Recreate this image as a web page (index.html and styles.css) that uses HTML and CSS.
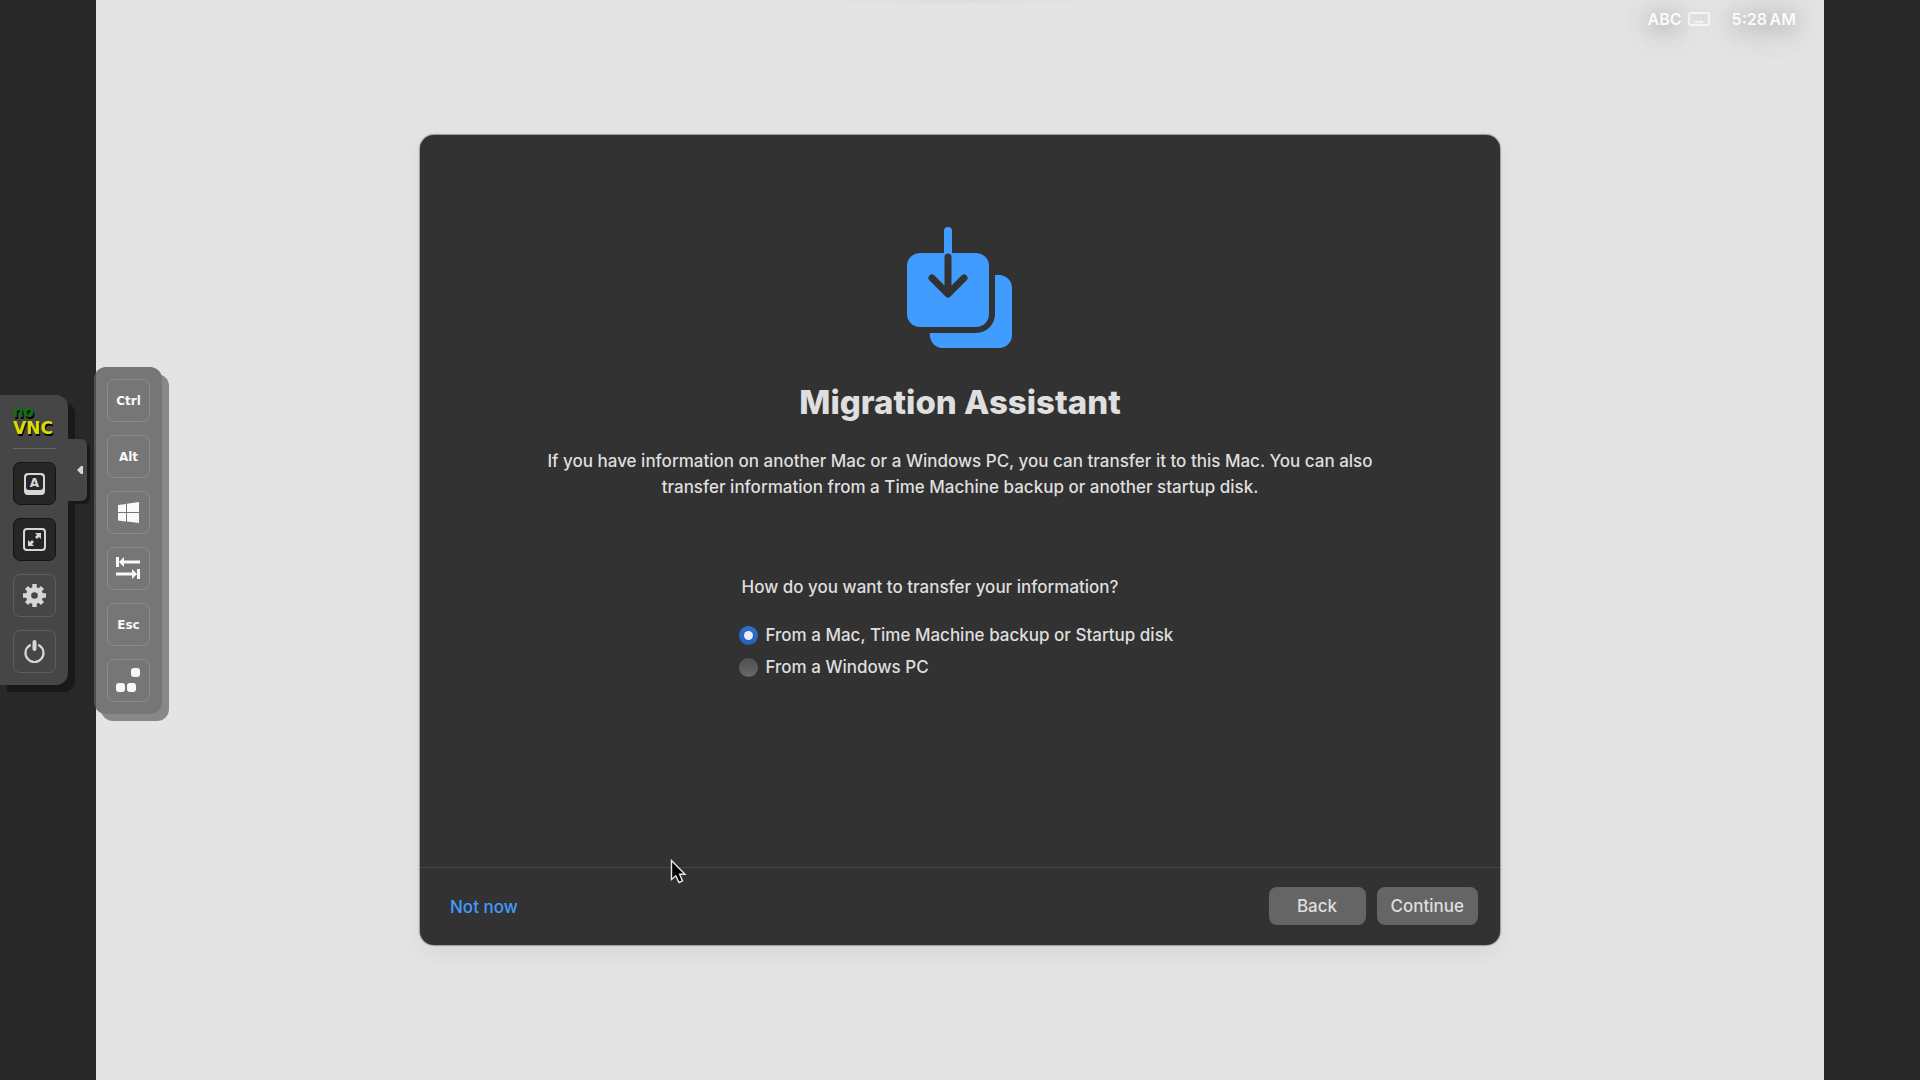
FILE: index.html
```html
<!DOCTYPE html>
<html lang="en">
<head>
<meta charset="utf-8">
<title>Migration Assistant</title>
<link rel="stylesheet" href="styles.css">
</head>
<body>
<div class="viewer">
  <main class="desktop">
    <header class="menubar">
      <span class="input-source">ABC
        <svg class="keyboard" viewBox="0 0 22 14" aria-hidden="true"><rect x="1" y="1" width="20" height="12" rx="2" fill="#e2e2e2" stroke="currentColor" stroke-width="1.4"/><path d="M3 4H19M3 7H19M3 10H5M17 10H19" stroke="#cfcfcf" stroke-width="1" stroke-dasharray="1 1"/><path d="M7 10H15" stroke="currentColor" stroke-width="1.4"/></svg>
      </span>
      <time>5:28&#8201;AM</time>
    </header>

    <section class="dialog">
      <div class="content">
        <svg class="hero" viewBox="0 0 106 122" aria-hidden="true">
          <path fill="#419cff" d="M13 26H69A13 13 0 0 1 82 39V87A13 13 0 0 1 69 100H13A13 13 0 0 1 0 87V39A13 13 0 0 1 13 26Z"/>
          <path fill="#419cff" d="M88 48H92A13 13 0 0 1 105 61V108A13 13 0 0 1 92 121H37A13 13 0 0 1 23 106H69A19 19 0 0 0 88 87Z"/>
          <path d="M41 4V26" stroke="#419cff" stroke-width="8" stroke-linecap="round"/>
          <path d="M41 30V64M25 51L41 67L57 51" fill="none" stroke="#323232" stroke-width="7" stroke-linecap="round" stroke-linejoin="round"/>
        </svg>
        <h1>Migration Assistant</h1>
        <p class="intro">If you have information on another Mac or a Windows PC, you can transfer it to this Mac. You can also transfer information from a Time Machine backup or another startup disk.</p>
        <fieldset class="choices">
          <legend>How do you want to transfer your information?</legend>
          <label><input type="radio" name="source" checked>From a Mac, Time Machine backup or Startup disk</label>
          <label><input type="radio" name="source">From a Windows PC</label>
        </fieldset>
      </div>
      <footer class="actions">
        <a href="#">Not now</a>
        <div class="buttons">
          <button type="button">Back</button>
          <button type="button">Continue</button>
        </div>
      </footer>
    </section>
  </main>

  <aside class="controls">
    <div class="bar">
      <div class="logo"><span class="logo-no">no</span><span class="logo-vnc">VNC</span></div>
      <hr>
      <button class="tool on" type="button" aria-label="Extra keys"><svg viewBox="0 0 25 25"><path fill="#d6d6d6" fill-rule="evenodd" d="M6 2H19Q23 2 23 6V20Q23 24 19 24H6Q2 24 2 20V6Q2 2 6 2ZM7 4Q4 4 4 7V16Q4 19 7 19H18Q21 19 21 16V7Q21 4 18 4Z"/><text x="12.500" y="16" text-anchor="middle" class="key-letter">A</text></svg></button>
      <button class="tool on" type="button" aria-label="Fullscreen"><svg viewBox="0 0 25 25"><rect x="2" y="2" width="21" height="21" rx="3" fill="none" stroke="#d6d6d6" stroke-width="2"/><path fill="#d6d6d6" d="M13 6H19V12L17 10L15 12L13 10L15 8ZM6 13L8 15L10 13L12 15L10 17L12 19H6Z"/></svg></button>
      <button class="tool" type="button" aria-label="Settings"><svg viewBox="0 0 25 25"><g stroke="#d6d6d6" stroke-width="4.400"><path d="M12.500 1V24M1 12.500H24M4.500 4.500L20.500 20.500M4.500 20.500L20.500 4.500"/></g><circle cx="12.500" cy="12.500" r="8.600" fill="#d6d6d6"/><circle cx="12.500" cy="12.500" r="3.300" fill="#464646"/></svg></button>
      <button class="tool" type="button" aria-label="Disconnect"><svg viewBox="0 0 25 25"><path d="M8 6.200A9 9 0 1 0 17 6.200" fill="none" stroke="#d6d6d6" stroke-width="2.200" stroke-linecap="round"/><path d="M12.500 3V10" stroke="#d6d6d6" stroke-width="4" stroke-linecap="round"/></svg></button>
    </div>
    <button class="handle" type="button" aria-label="Hide control bar"><svg viewBox="0 0 6 8"><path fill="#d6d6d6" d="M6 0V8H4L0 4L4 0Z"/></svg></button>
    <div class="keys">
      <button class="tool" type="button">Ctrl</button>
      <button class="tool" type="button">Alt</button>
      <button class="tool" type="button" aria-label="Windows"><svg viewBox="0 0 25 25"><path fill="#fff" d="M2 5L10 4V12H2ZM11 3.700L23 2V12H11ZM2 13H10V21.500L2 20.500ZM11 13H23V23L11 21.600Z"/></svg></button>
      <button class="tool" type="button" aria-label="Tab"><svg viewBox="0 0 25 25"><path fill="#fff" d="M0 1H3V11H0ZM3 6L8 1V4.500H24V7.500H8V11ZM21 13H24V23H21ZM21 18L16 23V19.500H0V16.500H16V13Z"/></svg></button>
      <button class="tool" type="button">Esc</button>
      <button class="tool" type="button" aria-label="Ctrl Alt Del"><svg viewBox="0 0 25 25"><g fill="#fff"><rect x="15" y="0" width="9" height="9" rx="3"/><rect x="0" y="15" width="9" height="9" rx="3"/><rect x="11" y="15" width="9" height="9" rx="3"/></g></svg></button>
    </div>
  </aside>

  <svg class="cursor" viewBox="0 0 17 26" aria-hidden="true"><path d="M1.500 1.500V20.500L5.800 16.800L9 23.500L12.500 22L9.600 15.200H15Z" fill="#000" stroke="#e8e8e8" stroke-width="1.400"/></svg>
</div>
</body>
</html>
```
FILE: styles.css
```css
* { box-sizing: border-box; }

body {
  margin: 0;
  background: #282828;
  font-family: Inter, "Liberation Sans", sans-serif;
  color: #dfdfdf;
}

button { margin: 0; padding: 0; border: 0; font: inherit; color: inherit; }
svg { display: block; }

.viewer {
  position: relative;
  display: flex;
  justify-content: center;
  height: 100vh;
  overflow: hidden;
}

/* Remote screen, always 16:10 */
.desktop {
  position: relative;
  display: flex;
  align-items: center;
  justify-content: center;
  height: 100%;
  aspect-ratio: 8 / 5;
  overflow: hidden;
  background: radial-gradient(150px 5px at 50% 0, #dcdcdc, #e4e4e4);
}

.menubar {
  position: absolute;
  top: 0;
  right: 0;
  display: flex;
  gap: 22px;
  align-items: center;
  padding: 8px 28px 0 0;
  font-size: 16px;
  line-height: 22px;
  font-weight: 600;
  color: #fbfbfb;
  text-shadow: 0 3px 30px rgba(0, 0, 0, .5), 0 3px 16px rgba(0, 0, 0, .15);
}
.input-source { display: flex; align-items: center; gap: 6px; }
.keyboard { width: 22px; height: 14px; }

.dialog {
  display: flex;
  flex-direction: column;
  width: 62.5%;
  height: 75%;
  border-radius: 14px;
  background: #323232;
  box-shadow: 0 0 1px 1px #9a9a9a, 0 8px 24px rgba(0, 0, 0, .06);
}

.content {
  flex: 1;
  display: flex;
  flex-direction: column;
  align-items: center;
  padding-top: 92px;
}
.hero { width: 106px; height: 122px; }

h1 {
  margin: 31px 0 0;
  font-size: 33px;
  line-height: 44px;
  font-weight: 800;
}

.intro {
  margin: 24px 0 0;
  width: 850px;
  font-size: 17px;
  line-height: 26px;
  text-align: center;
}
.intro, .choices, .actions { font-weight: 500; }

.choices {
  display: flex;
  flex-direction: column;
  margin: 74px 0 0;
  padding: 0;
  border: 0;
  width: 443px;
  font-size: 17px;
  line-height: 26px;
}
legend { padding: 0 0 18px 3px; }
label { display: flex; align-items: center; gap: 8px; margin-top: 2px; padding: 2px 0; white-space: nowrap; }

input {
  appearance: none;
  display: grid;
  place-items: center;
  flex: none;
  margin: 0;
  width: 19px;
  height: 19px;
  border-radius: 50%;
  background: linear-gradient(#505050, #686868);
}
input:checked { background: linear-gradient(#2f6fd2, #2a5fb4); }
input:checked::before {
  content: "";
  width: 9px;
  height: 9px;
  border-radius: 50%;
  background: #e9eef8;
}

.actions {
  display: flex;
  align-items: center;
  justify-content: space-between;
  height: 78px;
  padding: 0 22px 0 30px;
  border-top: 1px solid #464646;
  font-size: 17px;
}
.actions a { color: #419cff; text-decoration: none; }
.buttons { display: flex; gap: 11px; margin-bottom: 2px; }
.buttons button {
  min-width: 97px;
  height: 38px;
  padding: 0 14px;
  border-radius: 8px;
  background: #656565;
}

/* noVNC control bar */
.controls {
  position: absolute;
  left: 0;
  top: 0;
  bottom: 0;
  display: flex;
  align-items: center;
}
.bar {
  display: flex;
  flex-direction: column;
  gap: 13px;
  width: 68px;
  padding: 13px 12px 12px 13px;
  border-radius: 0 12px 12px 0;
  background: #464646;
  box-shadow: 7px 7px 0 #191919;
}
.logo {
  display: flex;
  flex-direction: column;
  height: 27px;
  font-family: "DejaVu Sans", sans-serif;
  font-weight: 700;
  text-shadow: 1px 2px 0 #000;
}
.logo-no { font-size: 15px; line-height: 9px; color: #087308; }
.logo-vnc { font-size: 17px; line-height: 22px; color: #dcdc00; }
hr { width: 43px; margin: 0; border: 0; border-top: 1px solid #686868; }

.tool {
  display: grid;
  place-items: center;
  width: 43px;
  height: 43px;
  border: 1px solid #5e5e5e;
  border-radius: 7px;
  background: none;
}
.tool svg { width: 25px; height: 25px; }
.tool.on { border-color: #141414; background: #262626; }
.key-letter { font: bold 12px "DejaVu Sans", sans-serif; fill: #d6d6d6; }

.handle {
  display: grid;
  place-items: center;
  width: 19px;
  height: 62px;
  margin-bottom: 140px;
  padding-left: 4px;
  border-radius: 0 6px 6px 0;
  background: #464646;
  box-shadow: 3px 3px 0 #191919;
}
.handle svg { width: 6px; height: 8px; }

.keys {
  display: flex;
  flex-direction: column;
  gap: 13px;
  width: 68px;
  margin: 1px 0 0 7px;
  padding: 12px 12px 12px 13px;
  border-radius: 12px;
  background: #5b5b5b;
  opacity: .8;
  box-shadow: 7px 7px 0 rgba(0, 0, 0, .5);
  color: #fff;
  font: bold 12px "DejaVu Sans", sans-serif;
}
.keys .tool { border-color: #767676; }

.cursor {
  position: absolute;
  left: 34.9%;
  top: 79.5%;
  width: 17px;
  height: 26px;
}
```
